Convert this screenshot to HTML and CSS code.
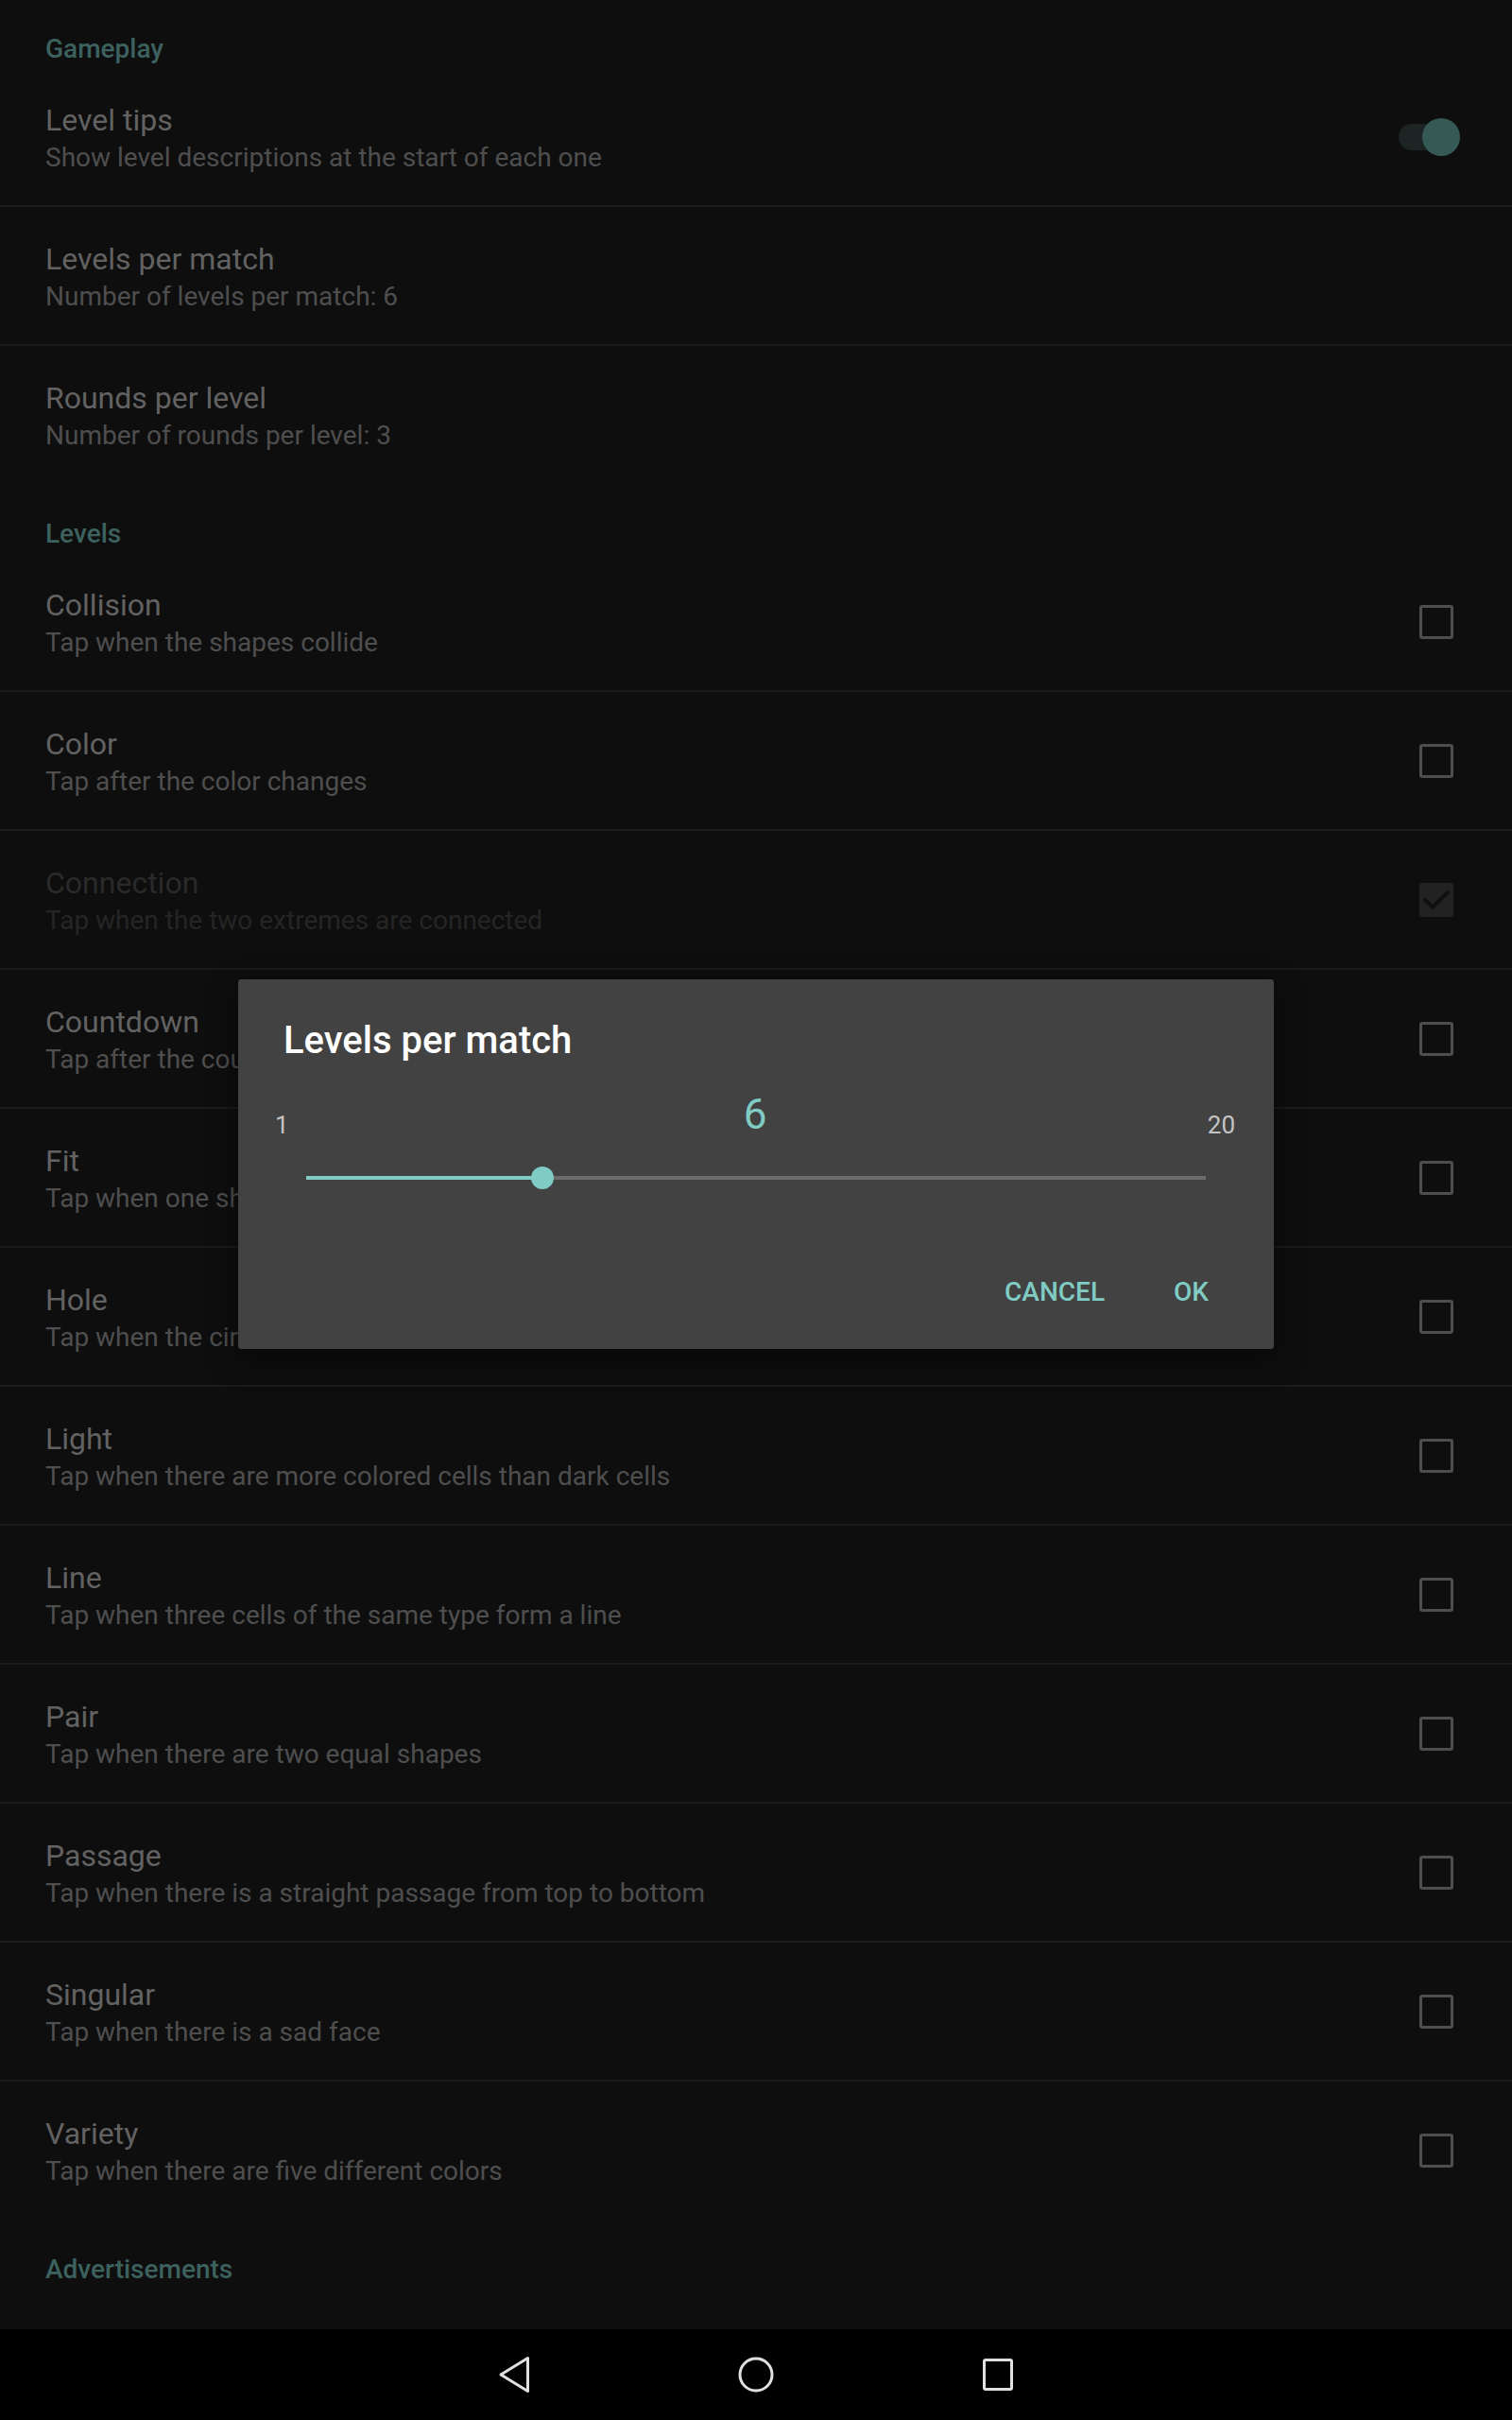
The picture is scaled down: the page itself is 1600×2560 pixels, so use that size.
FILE: index.html
```html
<!DOCTYPE html>
<html>
<head>
<meta charset="utf-8">
<link rel="stylesheet" href="styles.css">
</head>
<body>
<div class="screen">
  <div class="content">
    <div class="category">Gameplay</div>
    <div class="row">
      <div class="texts"><div class="title">Level tips</div><div class="summary">Show level descriptions at the start of each one</div></div>
      <div class="switch"><div class="track"></div><div class="thumb"></div></div>
    </div>
    <div class="row">
      <div class="texts"><div class="title">Levels per match</div><div class="summary">Number of levels per match: 6</div></div>
    </div>
    <div class="row last">
      <div class="texts"><div class="title">Rounds per level</div><div class="summary">Number of rounds per level: 3</div></div>
    </div>

    <div class="category">Levels</div>
    <div class="row">
      <div class="texts"><div class="title">Collision</div><div class="summary">Tap when the shapes collide</div></div>
      <div class="checkbox"></div>
    </div>
    <div class="row">
      <div class="texts"><div class="title">Color</div><div class="summary">Tap after the color changes</div></div>
      <div class="checkbox"></div>
    </div>
    <div class="row disabled">
      <div class="texts"><div class="title">Connection</div><div class="summary">Tap when the two extremes are connected</div></div>
      <div class="checkbox checked"><svg width="36" height="36" viewBox="0 0 36 36"><path d="M5 17 L14 25.5 L31 9" fill="none" stroke="#0f0f0f" stroke-width="4"/></svg></div>
    </div>
    <div class="row">
      <div class="texts"><div class="title">Countdown</div><div class="summary">Tap after the countdown ends</div></div>
      <div class="checkbox"></div>
    </div>
    <div class="row">
      <div class="texts"><div class="title">Fit</div><div class="summary">Tap when one shape fits into the other</div></div>
      <div class="checkbox"></div>
    </div>
    <div class="row">
      <div class="texts"><div class="title">Hole</div><div class="summary">Tap when the circle fits in the hole</div></div>
      <div class="checkbox"></div>
    </div>
    <div class="row">
      <div class="texts"><div class="title">Light</div><div class="summary">Tap when there are more colored cells than dark cells</div></div>
      <div class="checkbox"></div>
    </div>
    <div class="row">
      <div class="texts"><div class="title">Line</div><div class="summary">Tap when three cells of the same type form a line</div></div>
      <div class="checkbox"></div>
    </div>
    <div class="row">
      <div class="texts"><div class="title">Pair</div><div class="summary">Tap when there are two equal shapes</div></div>
      <div class="checkbox"></div>
    </div>
    <div class="row">
      <div class="texts"><div class="title">Passage</div><div class="summary">Tap when there is a straight passage from top to bottom</div></div>
      <div class="checkbox"></div>
    </div>
    <div class="row">
      <div class="texts"><div class="title">Singular</div><div class="summary">Tap when there is a sad face</div></div>
      <div class="checkbox"></div>
    </div>
    <div class="row last">
      <div class="texts"><div class="title">Variety</div><div class="summary">Tap when there are five different colors</div></div>
      <div class="checkbox"></div>
    </div>

    <div class="category">Advertisements</div>
  </div>

  <div class="navbar">
    <svg class="nav-icon" width="40" height="40" viewBox="0 0 40 40"><path d="M34.5 2.5 L34.5 37.5 L6 20 Z" fill="none" stroke="#e0e0e0" stroke-width="3" stroke-linejoin="round"/></svg>
    <svg class="nav-icon" width="40" height="40" viewBox="0 0 40 40"><circle cx="20" cy="20" r="17" fill="none" stroke="#e0e0e0" stroke-width="3"/></svg>
    <svg class="nav-icon" width="40" height="40" viewBox="0 0 40 40"><rect x="5.5" y="4.5" width="29" height="31" rx="1.5" fill="none" stroke="#e0e0e0" stroke-width="3"/></svg>
  </div>

  <div class="dialog">
    <div class="dialog-title">Levels per match</div>
    <div class="value-row">
      <div class="limit min">1</div>
      <div class="value">6</div>
      <div class="limit max">20</div>
    </div>
    <div class="slider">
      <div class="slider-track">
        <div class="slider-active" style="width: 26.3%"></div>
        <div class="slider-thumb" style="left: 26.3%"></div>
      </div>
    </div>
    <div class="buttons">
      <div class="btn">CANCEL</div>
      <div class="btn">OK</div>
    </div>
  </div>
</div>
</body>
</html>
```
FILE: styles.css
```css
* { box-sizing: border-box; }
html, body {
  margin: 0;
  padding: 0;
  background: #0e0e0e;
  font-family: Roboto, "Noto Sans", sans-serif;
}
.screen {
  position: relative;
  width: 1600px;
  height: 2560px;
  display: flex;
  flex-direction: column;
}
.content {
  height: 2464px;
  overflow: hidden;
  background: #0e0e0e;
}
.category {
  height: 72px;
  padding: 36px 48px 4px;
  font-size: 28px;
  line-height: 32px;
  font-weight: 500;
  color: #3c615e;
}
.row {
  height: 147px;
  display: flex;
  align-items: center;
  padding: 0 62px 0 48px;
  border-bottom: 2px solid #1b1b1b;
}
.row.last { border-bottom-color: transparent; }
.texts { flex: 1; }
.title {
  font-size: 32px;
  line-height: 44px;
  color: #626262;
}
.summary {
  font-size: 28px;
  line-height: 36px;
  color: #4e4e4e;
}
.row.disabled .title { color: #2a2a2a; }
.row.disabled .summary { color: #252525; }
.checkbox {
  width: 36px;
  height: 36px;
  border: 3px solid #4e4e4e;
  border-radius: 3px;
}
.checkbox.checked {
  border: none;
  background: #222222;
}
.checkbox svg { display: block; }
.switch {
  position: relative;
  width: 65px;
  height: 40px;
  margin-right: -7px;
}
.track {
  position: absolute;
  left: 0;
  top: 6px;
  width: 60px;
  height: 28px;
  border-radius: 14px;
  background: #1c2523;
}
.thumb {
  position: absolute;
  right: 0;
  top: 0;
  width: 40px;
  height: 40px;
  border-radius: 50%;
  background: #355955;
}
.navbar {
  height: 96px;
  background: #000;
  display: flex;
  justify-content: center;
  align-items: center;
  gap: 216px;
  padding-left: 0;
}
.nav-icon { display: block; }

.dialog {
  position: absolute;
  left: 252px;
  top: 1036px;
  width: 1096px;
  background: #424242;
  border-radius: 3px;
  box-shadow: 0 10px 30px rgba(0,0,0,0.5);
  padding-bottom: 40px;
}
.dialog-title {
  padding: 41px 48px 0;
  font-size: 40px;
  line-height: 48px;
  font-weight: 500;
  color: #ffffff;
}
.value-row {
  margin-top: 28px;
  height: 52px;
  display: grid;
  grid-template-columns: 1fr auto 1fr;
  align-items: start;
  padding: 0 41px 0 39px;
}
.value {
  font-size: 44px;
  line-height: 52px;
  color: #80cbc4;
}
.limit {
  font-size: 26px;
  line-height: 29px;
  padding-top: 23px;
  color: #c4c4c4;
}
.limit.max { justify-self: end; }
.slider {
  margin-top: 29px;
  height: 24px;
  padding: 10px 72px;
}
.slider-track {
  position: relative;
  height: 4px;
  background: #6c6c6c;
}
.slider-active {
  height: 4px;
  background: #80cbc4;
}
.slider-thumb {
  position: absolute;
  top: -10px;
  width: 24px;
  height: 24px;
  margin-left: -12px;
  border-radius: 50%;
  background: #80cbc4;
}
.buttons {
  margin-top: 89px;
  display: flex;
  justify-content: flex-end;
  gap: 73px;
  padding-right: 69px;
}
.btn {
  font-size: 28px;
  line-height: 40px;
  font-weight: 500;
  color: #80cbc4;
}
```
